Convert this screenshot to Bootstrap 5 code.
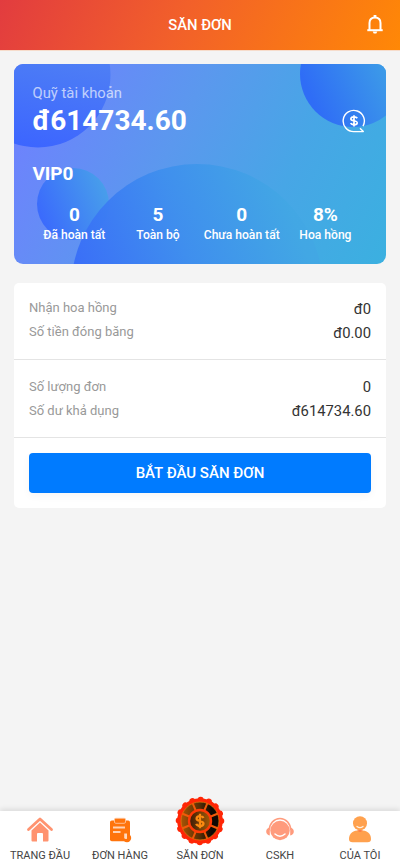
<!DOCTYPE html>
<html lang="vi">
<head>
<meta charset="utf-8">
<meta name="viewport" content="width=device-width, initial-scale=1">
<title>SĂN ĐƠN</title>
<link href="https://cdn.jsdelivr.net/npm/bootstrap@5.3.0/dist/css/bootstrap.min.css" rel="stylesheet">
<style>
body{font-family:Roboto,"Noto Sans",sans-serif;background:#f4f4f4;color:#333;height:866px;overflow:hidden}
.topbar{height:50px;background:linear-gradient(115deg,#e23c3f 0%,#f2602a 45%,#ff8806 100%);font-size:15px;line-height:50px;box-shadow:0 1px 0 #f6dccb}
.topbar .title{font-weight:500;font-size:14.8px}
.topbar .bell{width:24px;margin-right:13px}
.side{width:37px}
.fund{height:200px;margin:14px 14px 0;border-radius:9px;background:linear-gradient(116deg,#6c84fc 10%,#5b98ee 42%,#47a6e6 70%,#3bb0e0 100%)}
.fund-body{padding:19px 18px 0 18.500px}
.lbl{font-size:14.8px;line-height:20px;opacity:.65}
.amount{font-size:28px;line-height:36px;font-weight:700}
.coin{margin:0 2px 6px 0}
.vip{font-size:19px;line-height:24px;font-weight:700;margin-top:23px;letter-spacing:-.1px}
.stats{margin-top:18px}
.stat{width:83.7px;white-space:nowrap}
.stat b{display:block;font-size:19px;line-height:22px}
.stat span{display:block;font-size:12.1px;line-height:18px;font-weight:500}
.panel{margin:19px 14px 0;height:225px;border-radius:5px}
.group{height:77px;border-bottom:1px solid #e4e4e4;padding:13px 15px 0}
.group+.group{height:78px;padding-top:15px}
.line{height:24px}
.group+.group .line{height:23.500px}
.line span{font-size:13px;color:#999;line-height:24px}
.line em{font-style:normal;font-size:14.8px;line-height:26px;color:#333}
.group+.group em{line-height:25px}
.go{display:block;margin:15px 15px 0;height:40px;padding:0;border-radius:4px;font-size:15px;font-weight:500;line-height:40px;background:#007bff;border:0;width:342px;box-shadow:0 3px 8px rgba(0,0,0,.04)}
.tabs{height:55px;box-shadow:0 -2px 5px rgba(0,0,0,.1)}
.tab{width:80px;font-size:11px;line-height:14px;color:#444;white-space:nowrap}
.tab svg{display:block;margin:4px auto 6px}
.tab .wheel{margin:-15px auto 3px}
</style>
<script src="https://cdn.jsdelivr.net/npm/bootstrap@5.3.0/dist/js/bootstrap.bundle.min.js"></script>
</head>
<body class="d-flex flex-column">
<header class="topbar d-flex justify-content-between text-white">
  <div class="side"></div>
  <div class="title">SĂN ĐƠN</div>
  <svg class="bell" height="50" viewBox="0 0 24 50" fill="none" stroke="#fff" stroke-width="2"><path d="M6.500 30V23Q6.500 17.500 12 17.500T17.500 23V30"/><path d="M4.300 30.200H19.700"/><path d="M9.700 31.500h4.600l-1 2h-2.600z" fill="#fff" stroke="none"/><path d="M12 15v3" stroke-width="2.800"/></svg>
</header>

<section class="fund position-relative overflow-hidden text-white">
  <svg class="position-absolute top-0 start-0" width="372" height="200" viewBox="0 0 372 200">
    <defs>
      <linearGradient id="a" x1=".6" y1="0" x2=".4" y2="1"><stop offset=".3" stop-color="#4f80f4"/><stop offset="1" stop-color="#3c65ff"/></linearGradient>
      <linearGradient id="b" x1="0" y1=".7" x2="1" y2=".3"><stop stop-color="#3a68fd"/><stop offset="1" stop-color="#48a0ea"/></linearGradient>
      <linearGradient id="c" gradientUnits="userSpaceOnUse" x1="65" y1="215" x2="275" y2="140"><stop stop-color="#386cf8"/><stop offset=".5" stop-color="#3e8eee"/><stop offset="1" stop-color="#42a7e4"/></linearGradient>
      <linearGradient id="d" gradientUnits="userSpaceOnUse" x1="300" y1="40" x2="372" y2="8"><stop stop-color="#2f6df6"/><stop offset="1" stop-color="#3c9ae8"/></linearGradient>
    </defs>
    <circle cx="24" cy="11" r="72.500" fill="url(#a)"/>
    <circle cx="59" cy="140" r="36" fill="url(#b)"/>
    <circle cx="183" cy="226" r="126" fill="url(#c)" opacity=".94"/>
    <circle cx="339" cy="10" r="53" fill="url(#d)"/>
  </svg>
  <div class="fund-body position-relative">
    <div class="d-flex justify-content-between align-items-end">
      <div>
        <div class="lbl">Quỹ tài khoản</div>
        <div class="amount">đ614734.60</div>
      </div>
      <svg class="coin" width="24" height="24" viewBox="0 0 24 24" fill="none" stroke="#fff" stroke-width="1.400"><path d="M21 17.200A10.600 10.600 0 1 0 12 22.600H21.300L18 19.300" stroke-linejoin="round"/><path d="M15.300 9.300C14 7.400 9 7.300 8.900 9.900C8.900 12.500 15.300 11 15.200 13.900C15 16.400 9.800 16.300 8.600 14.200M12 6.200V17.500" stroke-width="1.700"/></svg>
    </div>
    <div class="vip">VIP0</div>
    <div class="stats d-flex text-center">
      <div class="stat"><b>0</b><span>Đã hoàn tất</span></div>
      <div class="stat"><b>5</b><span>Toàn bộ</span></div>
      <div class="stat"><b>0</b><span>Chưa hoàn tất</span></div>
      <div class="stat"><b>8%</b><span>Hoa hồng</span></div>
    </div>
  </div>
</section>

<section class="panel bg-white">
  <div class="group">
    <div class="line d-flex justify-content-between"><span>Nhận hoa hồng</span><em>đ0</em></div>
    <div class="line d-flex justify-content-between"><span>Số tiền đóng băng</span><em>đ0.00</em></div>
  </div>
  <div class="group">
    <div class="line d-flex justify-content-between"><span>Số lượng đơn</span><em>0</em></div>
    <div class="line d-flex justify-content-between"><span>Số dư khả dụng</span><em>đ614734.60</em></div>
  </div>
  <button class="go btn btn-primary">BẮT ĐẦU SĂN ĐƠN</button>
</section>

<nav class="tabs d-flex bg-white mt-auto text-center">
  <div class="tab">
    <svg width="28" height="28" viewBox="0 0 28 28" fill="#ff9370"><path d="M2.500 14.500L14 4L25.500 14.500" fill="none" stroke="#ff9370" stroke-width="2.800" stroke-linecap="round" stroke-linejoin="round"/><path d="M5.500 15.500L14 7.500L22.500 15.500V25.500Q22.500 26.500 21.500 26.500H17V19Q17 18 16 18H12Q11 18 11 19V26.500H6.500Q5.500 26.500 5.500 25.500Z"/></svg>TRANG ĐẦU</div>
  <div class="tab">
    <svg width="28" height="28" viewBox="0 0 28 28" fill="#ff740c"><rect x="4" y="5.500" width="20" height="20.700" rx="1.800"/><rect x="8.500" y="3.300" width="11" height="5" rx="1.300" stroke="#ffc49b" stroke-width=".9"/><path d="M7 12.500H19M7 17H14.500" stroke="#ffd3b5" stroke-width="1.800"/><circle cx="21" cy="23" r="4.200"/><path d="M18.200 18.500V23Q19 24.500 21 23.700V18.500Z" fill="#ffd9bf"/></svg>ĐƠN HÀNG</div>
  <div class="tab">
    <svg class="wheel" width="50" height="50" viewBox="0 0 50 50"><defs><linearGradient id="w" x1="0" x2="1"><stop stop-color="#a85405"/><stop offset=".5" stop-color="#552d05"/><stop offset=".8" stop-color="#100803"/></linearGradient><linearGradient id="h" x1="0" x2="1"><stop stop-color="#3d1b06"/><stop offset="1" stop-color="#a65c06"/></linearGradient></defs>
    <circle cx="25" cy="25" r="22.800" fill="#ff2606"/><circle cx="25" cy="25" r="21.300" fill="none" stroke="#ff2606" stroke-width="6" stroke-linecap="round" stroke-dasharray="0.01 8.3546"/>
    <circle cx="25" cy="25" r="19" fill="url(#w)" stroke="#d9790a" stroke-width=".8"/>
    <g stroke="#f05a0a" stroke-width="2"><path d="M25 5.500V44.500" transform="rotate(22.500 25 25)"/><path d="M25 5.500V44.500" transform="rotate(67.500 25 25)"/><path d="M25 5.500V44.500" transform="rotate(112.500 25 25)"/><path d="M25 5.500V44.500" transform="rotate(157.500 25 25)"/></g>
    <circle cx="25" cy="25" r="11" fill="url(#h)" stroke="#ff3a06" stroke-width="2.400"/>
    <path d="M28.500 22C27.500 19.500 21.800 19.600 21.600 22.500C21.500 25.800 28.700 24.200 28.500 27.700C28.200 30.800 22.500 30.800 21.200 27.900M25 17.800V32.200" fill="none" stroke="#fb8a10" stroke-width="2.300"/></svg>SĂN ĐƠN</div>
  <div class="tab">
    <svg width="28" height="28" viewBox="0 0 28 28" fill="#ff9b7d"><circle cx="14" cy="15.500" r="9.700"/><path d="M3.300 15A10.700 11.500 0 0 1 24.700 15" fill="none" stroke="#ff9b7d" stroke-width="1.500"/><path d="M3.800 12.500C-1 13-1 20 3.800 20.500ZM24.200 12.500C29 13 29 20 24.200 20.500Z"/><path d="M9 19Q14 23.500 19 19" fill="none" stroke="#fff" stroke-width="1.500" stroke-linecap="round"/></svg>CSKH</div>
  <div class="tab">
    <svg width="28" height="28" viewBox="0 0 28 28" fill="#ffa14e"><path d="M3 24C3 18 7 15.200 14 15.200S25 18 25 24Q25 27.300 21.500 27.300H6.500Q3 27.300 3 24Z"/><circle cx="14" cy="8.300" r="7"/><path d="M11 15.800Q14 14 17 15.800L14 17Z" fill="#ff7b43"/><path d="M11 11.500Q14 13.800 17 11.500" fill="none" stroke="#fff0e0" stroke-width="1.300" stroke-linecap="round"/></svg>CỦA TÔI</div>
</nav>
</body>
</html>
